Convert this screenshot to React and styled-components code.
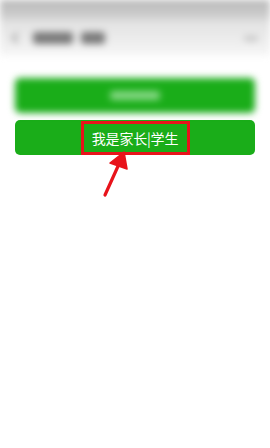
import React from "react";
import styled, { createGlobalStyle } from "styled-components";

const Global = createGlobalStyle`
  html, body { margin: 0; padding: 0; background: #fff; }
  body { font-family: "Noto Sans CJK SC", "Noto Sans", sans-serif; }
`;

const Page = styled.div`
  position: relative;
  width: 270px;
  height: 448px;
  overflow: hidden;
  background: #fff;
`;

const Blurred = styled.div`
  filter: blur(3.5px);
  margin: -6px -6px 0;
  padding: 6px 6px 0;
`;

const StatusBar = styled.div`
  height: 20px;
  background: linear-gradient(#b6b6b6, #d4d4d4);
`;

const Header = styled.div`
  height: 36px;
  display: flex;
  align-items: center;
  padding: 0 12px 0 13px;
  gap: 8px;
  background: linear-gradient(#e2e2e2, #eeeeee 65%, #f7f7f7);
`;

const Back = styled.div`
  width: 6px;
  height: 6px;
  border-left: 2px solid #999;
  border-bottom: 2px solid #999;
  transform: rotate(45deg);
  margin-right: 4px;
`;

const TitleBlock = styled.div`
  height: 12px;
  width: ${(p) => p.$w}px;
  background: #7a7a7a;
  border-radius: 3px;
`;

const Spacer = styled.div`
  flex: 1;
`;

const Dots = styled.div`
  width: 14px;
  height: 5px;
  background: #c4c4c4;
  border-radius: 2px;
`;

const Content = styled.div`
  padding: 0 15px;
`;

const GreenButton = styled.div`
  height: 35px;
  background: #1aad19;
  border-radius: 5px;
  display: flex;
  align-items: center;
  justify-content: center;
  color: #fff;
  font-size: 14px;
  margin-top: ${(p) => p.$mt}px;
`;

const FakeLabel = styled.div`
  width: 50px;
  height: 9px;
  background: #86d885;
  border-radius: 3px;
`;

const Highlight = styled.span`
  box-sizing: border-box;
  width: 109px;
  height: 34px;
  border: 3px solid #e8131b;
  display: flex;
  align-items: center;
  justify-content: center;
  letter-spacing: -0.2px;
`;

const Arrow = styled.svg`
  position: absolute;
  left: 0;
  top: 0;
  pointer-events: none;
`;

export default function App() {
  return (
    <>
      <Global />
      <Page>
        <Blurred>
          <StatusBar />
          <Header>
            <Back />
            <TitleBlock $w={40} />
            <TitleBlock $w={24} />
            <Spacer />
            <Dots />
          </Header>
          <Content>
            <GreenButton $mt={22}>
              <FakeLabel />
            </GreenButton>
          </Content>
        </Blurred>
        <Content>
          <GreenButton $mt={7}>
            <Highlight>我是家长|学生</Highlight>
          </GreenButton>
        </Content>
        <Arrow width="270" height="448" viewBox="0 0 270 448">
          <line x1="105" y1="195" x2="119" y2="164" stroke="#e8131b" strokeWidth="3.2" strokeLinecap="round" />
          <polygon points="124,152 110,163 127,169" fill="#e8131b" stroke="#e8131b" strokeWidth="1.5" strokeLinejoin="round" />
        </Arrow>
      </Page>
    </>
  );
}
